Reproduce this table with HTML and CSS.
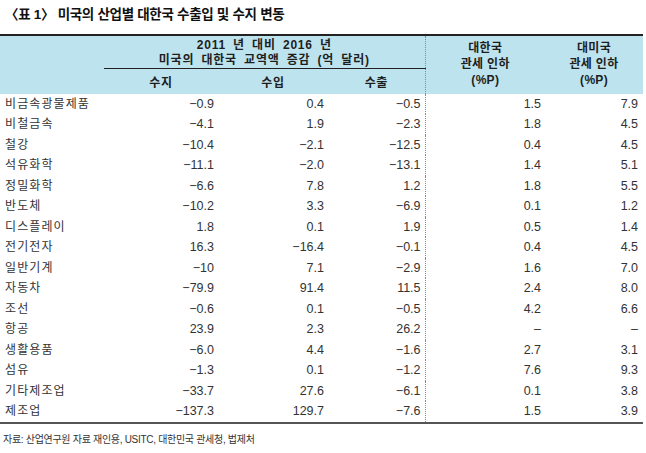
FILE: index.html
```html
<!DOCTYPE html>
<html lang="ko">
<head>
<meta charset="utf-8">
<link rel="stylesheet" href="styles.css">
</head>
<body>
<h1 class="title">〈표 1〉 미국의 산업별 대한국 수출입 및 수지 변동</h1>
<table class="data">
  <colgroup>
    <col class="c-label"><col class="c-bal"><col class="c-imp"><col class="c-exp"><col class="c-kr"><col class="c-us">
  </colgroup>
  <thead>
    <tr class="h1">
      <th rowspan="2"></th>
      <th colspan="3" class="group">2011 년 대비 2016 년<br>미국의 대한국 교역액 증감 (억 달러)</th>
      <th rowspan="2" class="sep tall">대한국<br>관세 인하<br>(%P)</th>
      <th rowspan="2" class="tall">대미국<br>관세 인하<br>(%P)</th>
    </tr>
    <tr class="h2">
      <th class="sub">수지</th>
      <th class="sub">수입</th>
      <th class="sub">수출</th>
    </tr>
  </thead>
  <tbody>
    <tr><td>비금속광물제품</td><td>−0.9</td><td>0.4</td><td>−0.5</td><td class="sep">1.5</td><td>7.9</td></tr>
    <tr><td>비철금속</td><td>−4.1</td><td>1.9</td><td>−2.3</td><td class="sep">1.8</td><td>4.5</td></tr>
    <tr><td>철강</td><td>−10.4</td><td>−2.1</td><td>−12.5</td><td class="sep">0.4</td><td>4.5</td></tr>
    <tr><td>석유화학</td><td>−11.1</td><td>−2.0</td><td>−13.1</td><td class="sep">1.4</td><td>5.1</td></tr>
    <tr><td>정밀화학</td><td>−6.6</td><td>7.8</td><td>1.2</td><td class="sep">1.8</td><td>5.5</td></tr>
    <tr><td>반도체</td><td>−10.2</td><td>3.3</td><td>−6.9</td><td class="sep">0.1</td><td>1.2</td></tr>
    <tr><td>디스플레이</td><td>1.8</td><td>0.1</td><td>1.9</td><td class="sep">0.5</td><td>1.4</td></tr>
    <tr><td>전기전자</td><td>16.3</td><td>−16.4</td><td>−0.1</td><td class="sep">0.4</td><td>4.5</td></tr>
    <tr><td>일반기계</td><td>−10</td><td>7.1</td><td>−2.9</td><td class="sep">1.6</td><td>7.0</td></tr>
    <tr><td>자동차</td><td>−79.9</td><td>91.4</td><td>11.5</td><td class="sep">2.4</td><td>8.0</td></tr>
    <tr><td>조선</td><td>−0.6</td><td>0.1</td><td>−0.5</td><td class="sep">4.2</td><td>6.6</td></tr>
    <tr><td>항공</td><td>23.9</td><td>2.3</td><td>26.2</td><td class="sep">–</td><td>–</td></tr>
    <tr><td>생활용품</td><td>−6.0</td><td>4.4</td><td>−1.6</td><td class="sep">2.7</td><td>3.1</td></tr>
    <tr><td>섬유</td><td>−1.3</td><td>0.1</td><td>−1.2</td><td class="sep">7.6</td><td>9.3</td></tr>
    <tr><td>기타제조업</td><td>−33.7</td><td>27.6</td><td>−6.1</td><td class="sep">0.1</td><td>3.8</td></tr>
    <tr><td>제조업</td><td>−137.3</td><td>129.7</td><td>−7.6</td><td class="sep">1.5</td><td>3.9</td></tr>
  </tbody>
</table>
<p class="source">자료: 산업연구원 자료 재인용, USITC, 대한민국 관세청, 법제처</p>
</body>
</html>
```

FILE: styles.css
```css
html, body {
  margin: 0;
  padding: 0;
  background: #ffffff;
}
body {
  font-family: "Liberation Sans", "Noto Sans CJK KR", sans-serif;
  color: #333333;
  width: 646px;
}
.title {
  margin: 0;
  padding: 6px 0 0 5px;
  height: 28px;
  box-sizing: border-box;
  font-size: 13.5px;
  line-height: 17px;
  font-weight: bold;
  color: #111111;
  letter-spacing: -0.3px;
}
.data {
  margin-top: 6px;
  width: 643px;
  table-layout: fixed;
  border-collapse: collapse;
  border-top: 2px solid #222222;
  border-bottom: 2px solid #555555;
  font-size: 12.5px;
}
.c-label { width: 104px; }
.c-bal { width: 114px; }
.c-imp { width: 110px; }
.c-exp { width: 97px; }
.c-kr { width: 120px; }
.c-us { width: 98px; }

thead th {
  background: #bde3ee;
  color: #1e1e1e;
  font-weight: bold;
  font-size: 12px;
  padding: 0;
  text-align: center;
  vertical-align: middle;
}
.h1 { height: 32px; }
.h2 { height: 25px; }
.group {
  line-height: 15px;
  border-bottom: 1.5px solid #222222;
  letter-spacing: 0.8px;
  word-spacing: 3px;
  padding-top: 2px;
}
.sub { letter-spacing: 0.6px; }
.tall { line-height: 16px; padding-bottom: 2px; letter-spacing: 0.3px; }
.sep { border-left: 1px dotted #8a8a8a; }

tbody td {
  height: 20.5px;
  padding: 0 4px 0 0;
  text-align: right;
  vertical-align: middle;
  line-height: 20px;
  color: #333333;
}
tbody td:first-child {
  text-align: left;
  padding: 0 0 0 5px;
  font-size: 12px;
  letter-spacing: 1.1px;
}
tbody td:last-child { padding-right: 5px; }
.source {
  margin: 9px 0 0 3px;
  font-size: 10px;
  line-height: 14px;
  letter-spacing: -0.3px;
  color: #333333;
}
```
